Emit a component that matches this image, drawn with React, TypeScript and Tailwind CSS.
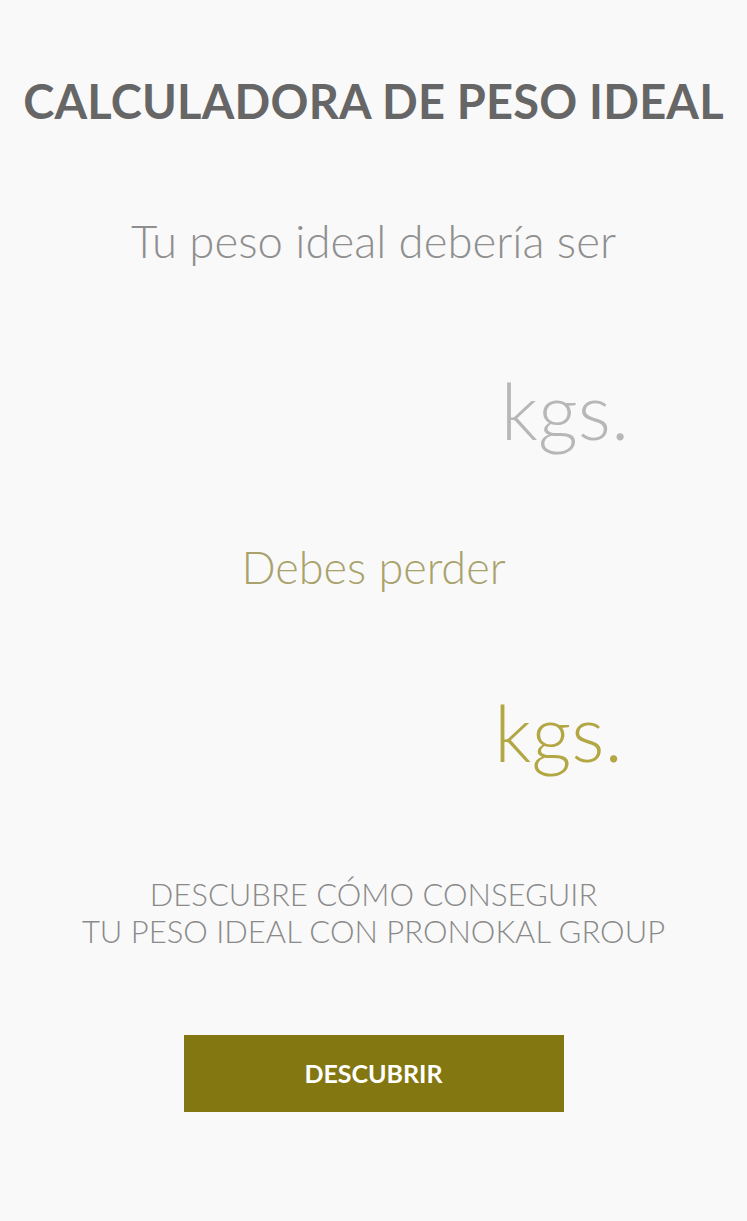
export default function App() {
  return (
    <div className="min-h-[1221px] w-full bg-[#f9f9f9] font-['Lato','Liberation_Sans',sans-serif] flex flex-col items-center">
      <h1 className="mt-[76px] text-[47px] leading-[50px] font-bold text-[#666666] tracking-[0.2px] whitespace-nowrap">
        CALCULADORA DE PESO IDEAL
      </h1>

      <p className="mt-[90px] text-[45.5px] leading-[50px] font-light text-[#8f8f8f]">
        Tu peso ideal debería ser
      </p>

      <div className="mt-[104px] flex items-baseline">
        <span className="w-[383px]"></span>
        <span className="text-[78px] leading-[80px] font-light text-[#b7b7b7]">kgs.</span>
      </div>

      <p className="mt-[92px] text-[45px] leading-[50px] font-light text-[#a9a26c]">
        Debes perder
      </p>

      <div className="mt-[100px] flex items-baseline">
        <span className="w-[370px]"></span>
        <span className="text-[78px] leading-[80px] font-light text-[#b3a744]">kgs.</span>
      </div>

      <p className="mt-[104px] text-[31px] leading-[37px] font-light text-[#8a8a8a] text-center">
        DESCUBRE CÓMO CONSEGUIR
        <br />
        TU PESO IDEAL CON PRONOKAL GROUP
      </p>

      <button className="mt-[85px] w-[380px] h-[77px] bg-[#837711] text-white text-[25px] font-bold">
        DESCUBRIR
      </button>
    </div>
  )
}
